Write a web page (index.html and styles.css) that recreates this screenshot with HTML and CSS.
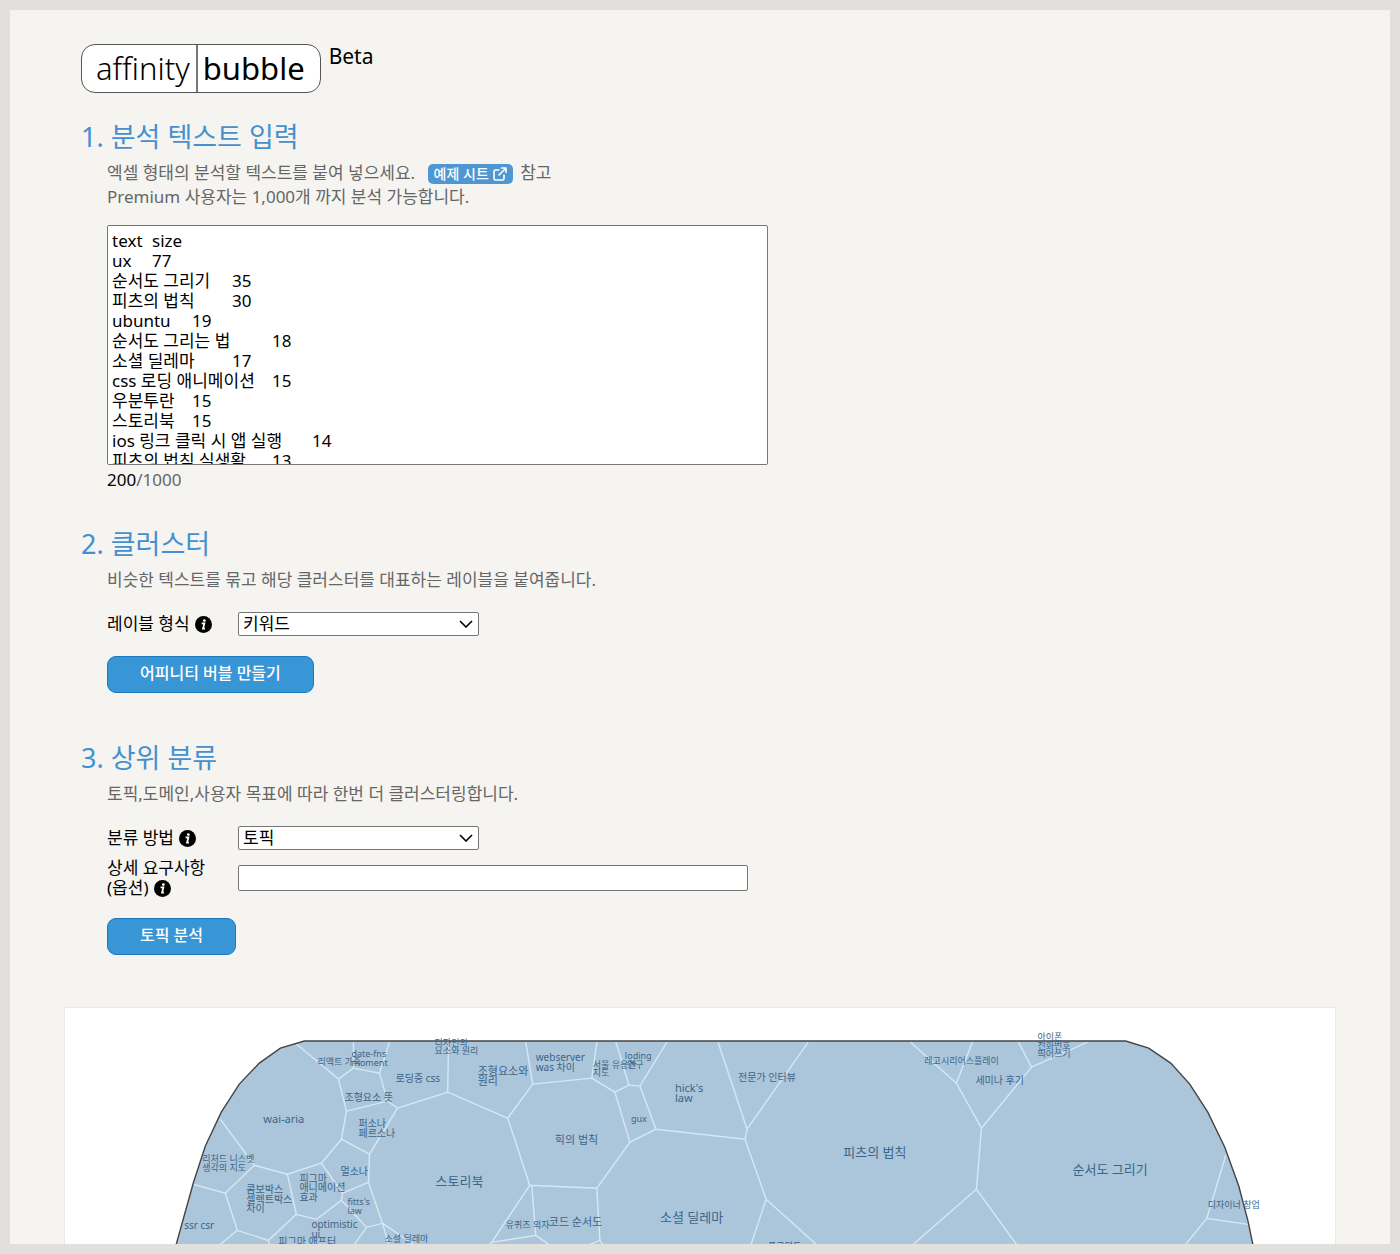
FILE: index.html
```html
<!DOCTYPE html>
<html lang="ko">
<head>
    <meta charset="UTF-8">
    <meta name="viewport" content="width=device-width, initial-scale=1.0">
    <title>affinity bubble</title>
    <link rel="stylesheet" href="styles.css">
</head>
<body>
    <svg class="symbols" aria-hidden="true">
        <symbol id="icon-info" viewBox="0 0 16 16">
            <circle cx="8" cy="8" r="8" fill="#000"/>
            <circle cx="8.8" cy="4.3" r="1.3" fill="#fff"/>
            <path d="M6.2 7h2.6l-1.2 4.8h1.8" fill="none" stroke="#fff" stroke-width="1.7"/>
        </symbol>
    </svg>

    <div class="page">
        <main class="content">
            <header class="header">
                <h1 class="logo"><span class="logo-left">affinity</span><span class="logo-right">bubble</span></h1>
                <span class="beta">Beta</span>
            </header>

            <section class="step">
                <h2>1. 분석 텍스트 입력</h2>
                <div class="step-body">
                    <p class="desc">
                        엑셀 형태의 분석할 텍스트를 붙여 넣으세요.
                        <a class="badge" href="#">예제 시트
                            <svg viewBox="0 0 14 14" width="14" height="14" fill="none" stroke="currentColor" stroke-width="1.6" stroke-linecap="round" stroke-linejoin="round">
                                <path d="M6 3H2.500Q1 3 1 4.500V11.500Q1 13 2.500 13H9.500Q11 13 11 11.500V8M8.500 1H13V5.500M13 1L6 8"/>
                            </svg>
                        </a>
                        참고<br>
                        Premium 사용자는 1,000개 까지 분석 가능합니다.
                    </p>
                    <textarea class="source" aria-label="분석 텍스트">
text	size
ux	77
순서도 그리기	35
피츠의 법칙	30
ubuntu	19
순서도 그리는 법	18
소셜 딜레마	17
css 로딩 애니메이션	15
우분투란	15
스토리북	15
ios 링크 클릭 시 앱 실행	14
피츠의 법칙 실생활	13</textarea>
                    <p class="count"><b>200</b>/1000</p>
                </div>
            </section>

            <section class="step">
                <h2>2. 클러스터</h2>
                <div class="step-body">
                    <p class="desc">비슷한 텍스트를 묶고 해당 클러스터를 대표하는 레이블을 붙여줍니다.</p>
                    <div class="field">
                        <label for="labelType">레이블 형식 <svg class="info"><use href="#icon-info"/></svg></label>
                        <select id="labelType">
                            <option>키워드</option>
                        </select>
                    </div>
                    <button class="btn">어피니티 버블 만들기</button>
                </div>
            </section>

            <section class="step">
                <h2>3. 상위 분류</h2>
                <div class="step-body">
                    <p class="desc">토픽,도메인,사용자 목표에 따라 한번 더 클러스터링합니다.</p>
                    <div class="field">
                        <label for="method">분류 방법 <svg class="info"><use href="#icon-info"/></svg></label>
                        <select id="method">
                            <option>토픽</option>
                        </select>
                    </div>
                    <div class="field">
                        <label for="detail">상세 요구사항 (옵션) <svg class="info"><use href="#icon-info"/></svg></label>
                        <input type="text" id="detail">
                    </div>
                    <button class="btn">토픽 분석</button>
                </div>
            </section>
        </main>

        <div class="chart">
            <svg viewBox="66 1008 1268 236" role="img" aria-label="어피니티 버블">
                <path class="bubble" d="M177 1244L194 1183L206 1146L222 1112L240 1084L260 1063L281 1048L305 1041H1125L1148 1048L1170 1063L1189 1084L1207 1112L1224 1147L1238 1186L1247 1220L1252 1244V1260H177Z"/>
                <path class="cells" d="
                    M297 1044L339 1079L354 1068V1042M354 1068L380 1073L390 1042M380 1073L388 1101L398 1108
                    M339 1079L347 1111L388 1101M398 1108L448 1092L449 1042M347 1111L342 1139L370 1154L398 1108
                    M342 1139L322 1163L288 1174L255 1165L221 1119M255 1165L226 1193L194 1184M226 1193L238 1230L221 1244
                    M238 1230L269 1240L297 1214L288 1174M269 1240L270 1244M297 1214L317 1219L342 1200L343 1193L322 1163
                    M343 1193L369 1182L370 1154M369 1182L383 1223L367 1227L342 1200M367 1227L355 1244
                    M383 1223L389 1244M383 1223L414 1244
                    M448 1092L508 1118L533 1084L526 1042M533 1084L592 1078L597 1042M592 1078L615 1092L629 1085L616 1042
                    M629 1085L640 1086L667 1042M640 1086L656 1129L630 1142L615 1092M630 1142L597 1188L530 1185L508 1118
                    M530 1185L492 1242L536 1235L532 1185M536 1235L549 1244M597 1188L600 1240L590 1244M600 1240L603 1244
                    M492 1242L490 1244
                    M656 1129L745 1139L747 1129L718 1042M747 1129L808 1042M745 1139L766 1199L751 1244M766 1199L816 1244
                    M910 1042L956 1083L981 1128L976 1189L913 1244M956 1083L972 1042M976 1189L1016 1244
                    M981 1128L1031 1067L1018 1042M1031 1067L1087 1042M1225 1155L1206 1218L1247 1224M1206 1218L1185 1244"/>
                <path class="outline" d="M177 1244L194 1183L206 1146L222 1112L240 1084L260 1063L281 1048L305 1041H1125L1148 1048L1170 1063L1189 1084L1207 1112L1224 1147L1238 1186L1247 1220L1252 1244"/>
                <g class="t9">
                    <text x="318" y="1065">리액트 가죽</text>
                    <text x="352" y="1057">date-fns<tspan x="352" dy="9">moment</tspan></text>
                    <text x="435" y="1046">디자인의<tspan x="435" dy="8">요소와 원리</tspan></text>
                    <text x="593" y="1068">서울 유용한<tspan x="593" dy="8">지도</tspan></text>
                    <text x="625" y="1059">loding<tspan x="627" dy="9">연구</tspan></text>
                    <text x="631" y="1122">gux</text>
                    <text x="203" y="1162">리처드 니스벳<tspan x="203" dy="9">생각의 지도</tspan></text>
                    <text x="348" y="1205">fitts's<tspan x="348" dy="9">law</tspan></text>
                    <text x="385" y="1242">소셜 딜레마</text>
                    <text x="506" y="1228">유퀴즈 의자</text>
                    <text x="924" y="1064">레고시리어스플레이</text>
                    <text x="1037" y="1040">아이폰<tspan x="1037" dy="9">전화번호</tspan><tspan x="1037" dy="8">띄어쓰기</tspan></text>
                    <text x="1207" y="1208">디자이너 창업</text>
                    <text x="768" y="1249">프로덕트</text>
                </g>
                <g class="t10">
                    <text x="396" y="1082">로딩중 css</text>
                    <text x="345" y="1101">조형요소 뜻</text>
                    <text x="359" y="1127">퍼소나<tspan x="359" dy="10">페르소나</tspan></text>
                    <text x="341" y="1175">멀소나</text>
                    <text x="300" y="1182">피그마<tspan x="300" dy="9">애니메이션</tspan><tspan x="300" dy="10">효과</tspan></text>
                    <text x="247" y="1193">콤보박스<tspan x="247" dy="10">셀렉트박스</tspan><tspan x="247" dy="9">차이</tspan></text>
                    <text x="185" y="1229">ssr csr</text>
                    <text x="312" y="1228">optimistic<tspan x="312" dy="10">ui</tspan></text>
                    <text x="279" y="1245">피그마 애프터</text>
                    <text x="536" y="1061">webserver<tspan x="536" dy="10">was 차이</tspan></text>
                    <text x="738" y="1081">전문가 인터뷰</text>
                    <text x="975" y="1084">세미나 후기</text>
                </g>
                <g class="t11">
                    <text x="478" y="1075">조형요소와<tspan x="478" dy="10">원리</tspan></text>
                    <text x="264" y="1123">wai-aria</text>
                    <text x="675" y="1092">hick's<tspan x="675" dy="10">law</tspan></text>
                    <text x="555" y="1144">힉의 법칙</text>
                    <text x="549" y="1226">코드 순서도</text>
                </g>
                <g class="t13">
                    <text x="436" y="1186">스토리북</text>
                    <text x="660" y="1222">소셜 딜레마</text>
                    <text x="843" y="1157">피츠의 법칙</text>
                    <text x="1072" y="1174">순서도 그리기</text>
                </g>
            </svg>
        </div>
    </div>
</body>
</html>
```
FILE: styles.css
```css
* {
    box-sizing: border-box;
}

body {
    margin: 0;
    padding: 10px;
    background-color: #e1e0dc;
    color: #000;
    font-family: "Noto Sans", "Noto Sans CJK KR", sans-serif;
    font-size: 17px;
    line-height: 24px;
}

h1, h2, p {
    margin: 0;
    font-weight: 400;
}

.symbols {
    position: absolute;
    width: 0;
    height: 0;
}

.page {
    padding: 34px 54px 0;
    background-color: #f5f4f0;
}

.content {
    padding: 0 17px 39px;
}

.header {
    display: flex;
    gap: 8px;
    margin-bottom: 24px;
}

.logo {
    display: flex;
    height: 49px;
    border: 1px solid #555;
    border-radius: 14px;
    background-color: #fff;
    font-size: 31px;
    line-height: 46px;
}

.logo-left {
    padding: 0 6px 0 14px;
    border-right: 2px solid #777;
    font-weight: 300;
}

.logo-right {
    padding: 0 15px 0 5px;
}

.beta {
    font-size: 21px;
}

.step {
    padding-bottom: 32px;
}

.step:last-child {
    padding-bottom: 0;
}

h2 {
    color: #4490cf;
    font-size: 27px;
    line-height: 40px;
}

.step-body {
    padding: 4px 0 0 26px;
}

.desc {
    margin-bottom: 20px;
    color: #666;
}

.step:first-of-type .desc {
    margin-bottom: 16px;
}

.badge {
    display: inline-flex;
    align-items: center;
    gap: 4px;
    height: 20px;
    margin: 0 3px 0 8px;
    padding: 0 6px;
    border-radius: 5px;
    background-color: #4e97d2;
    color: #fff;
    font-size: 14px;
    font-weight: 500;
    text-decoration: none;
    vertical-align: middle;
}

textarea,
select,
input {
    border: 1px solid #767676;
    border-radius: 2px;
    background-color: #fff;
    color: #000;
    font: inherit;
}

.source {
    display: block;
    width: 100%;
    max-width: 661px;
    height: 240px;
    padding: 5px 4px;
    line-height: 20px;
    overflow: hidden;
    resize: none;
    tab-size: 40px;
}

.count {
    margin-top: 3px;
    color: #666;
}

.count b {
    color: #000;
    font-weight: 400;
}

.field {
    display: flex;
    align-items: center;
    margin-bottom: 8px;
}

.field label {
    width: 131px;
    padding-right: 20px;
    line-height: 20px;
}

.info {
    width: 17px;
    height: 17px;
    margin-left: 1px;
    vertical-align: -3px;
}

select {
    width: 241px;
    height: 24px;
    padding: 0 4px;
    line-height: 20px;
    appearance: none;
    background-image: url("data:image/svg+xml,%3Csvg xmlns='http://www.w3.org/2000/svg' width='14' height='8' fill='none' stroke='%23000' stroke-width='1.6'%3E%3Cpath d='M1 1l6 6 6-6'/%3E%3C/svg%3E");
    background-repeat: no-repeat;
    background-position: right 5px center;
}

.field input {
    flex: 0 1 510px;
    min-width: 0;
    height: 26px;
    padding: 0 4px;
}

.btn {
    display: block;
    height: 37px;
    margin: 20px 0 13px;
    padding: 0 32px 3px;
    border: 1px solid #1a78bd;
    border-radius: 9px;
    background-color: #3895d6;
    color: #fff;
    font: inherit;
    font-size: 16px;
    font-weight: 500;
    cursor: pointer;
}

.chart {
    border: 1px solid #ebeae6;
    border-bottom: none;
    background-color: #fff;
}

.chart svg {
    display: block;
    width: 100%;
}

.chart text {
    fill: #3c6488;
}

.bubble {
    fill: #abc6db;
}

.cells {
    fill: none;
    stroke: #d5e7f5;
    stroke-width: 1.4;
}

.outline {
    fill: none;
    stroke: #444;
    stroke-width: 1.4;
}

.t9 {
    font-size: 9px;
}

.t10 {
    font-size: 10px;
}

.t11 {
    font-size: 11px;
}

.t13 {
    font-size: 13px;
}
```
